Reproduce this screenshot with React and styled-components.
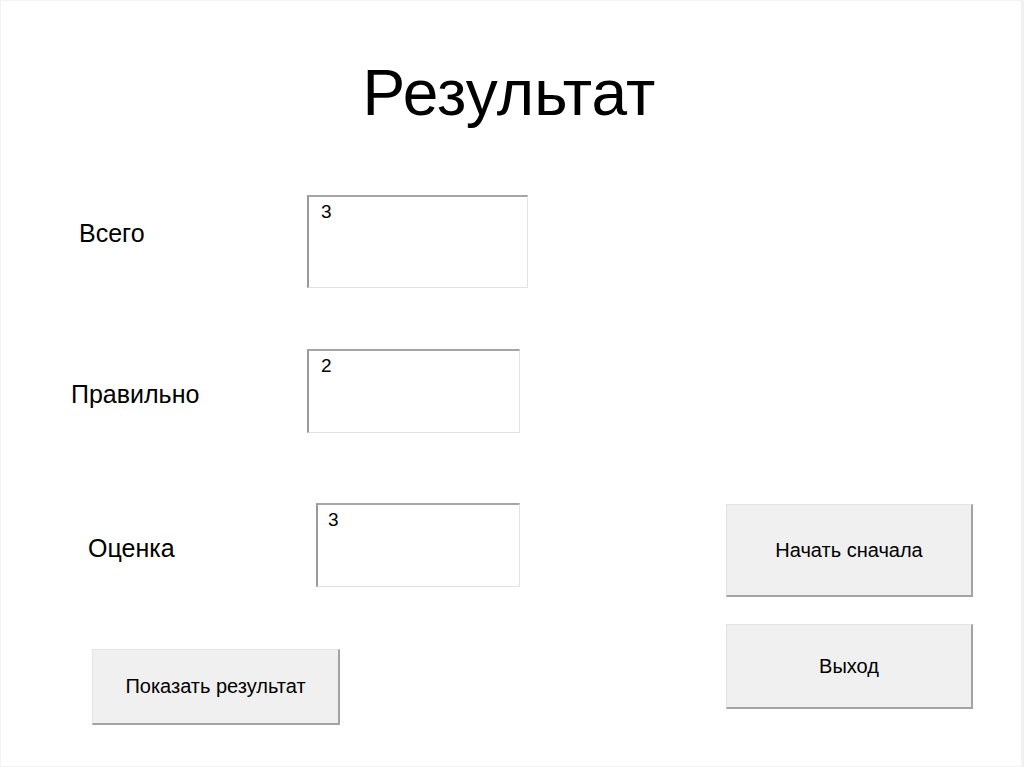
import React from "react";
import styled, { createGlobalStyle } from "styled-components";

const GlobalStyle = createGlobalStyle`
  html, body {
    margin: 0;
    padding: 0;
    background: #ffffff;
  }
  body {
    font-family: "Liberation Sans", Arial, sans-serif;
    color: #000;
  }
  * { box-sizing: border-box; }
`;

const Slide = styled.div`
  width: 1024px;
  height: 767px;
  background: #ffffff;
  border: 1px solid #f3f3f3;
  border-right: 3px solid #f1f1f1;
  overflow: hidden;
`;

const Title = styled.h1`
  margin: 60px 0 0 0;
  padding-right: 4px;
  font-size: 64px;
  line-height: 64px;
  font-weight: 400;
  text-align: center;
  letter-spacing: 0.2px;
`;

const Main = styled.div`
  margin-top: 70px;
  display: grid;
  grid-template-columns: 725px 247px;
`;

const LeftColumn = styled.div`
  display: flex;
  flex-direction: column;
`;

const RightColumn = styled.div`
  display: flex;
  flex-direction: column;
  gap: 27px;
  padding-top: 309px;
`;

const FieldRow = styled.div`
  display: grid;
  grid-template-columns: ${(p) => p.$boxX}px ${(p) => p.$boxW}px;
  margin-top: ${(p) => p.$gap}px;
`;

const Label = styled.div`
  padding-left: ${(p) => p.$x}px;
  padding-top: ${(p) => p.$top}px;
  font-size: 25px;
  line-height: 25px;
`;

const ValueBox = styled.div`
  height: ${(p) => p.$h}px;
  background: #ffffff;
  border-top: 2px solid #a5a5a5;
  border-left: 2px solid #9a9a9a;
  border-right: 1px solid #e2e2e2;
  border-bottom: 1px solid #e2e2e2;
  padding: 5px 0 0 ${(p) => p.$pad}px;
  font-size: 19px;
  line-height: 19px;
`;

const ActionButton = styled.button`
  width: ${(p) => p.$w}px;
  height: ${(p) => p.$h}px;
  margin-left: ${(p) => p.$x || 0}px;
  margin-top: ${(p) => p.$top || 0}px;
  background: #f0f0f0;
  border-top: 1px solid #e4e4e4;
  border-left: 1px solid #e4e4e4;
  border-right: 2px solid #a3a3a3;
  border-bottom: 2px solid #a3a3a3;
  font-family: "Liberation Sans", Arial, sans-serif;
  font-size: 20px;
  color: #000;
  padding: 0;
  display: flex;
  align-items: center;
  justify-content: center;
  cursor: pointer;
`;

const fields = [
  { label: "Всего", value: "3", gap: 0, labelX: 78, labelTop: 26, boxX: 306, boxW: 221, boxH: 93, pad: 12 },
  { label: "Правильно", value: "2", gap: 61, labelX: 70, labelTop: 33, boxX: 306, boxW: 213, boxH: 84, pad: 12 },
  { label: "Оценка", value: "3", gap: 70, labelX: 87, labelTop: 33, boxX: 315, boxW: 204, boxH: 84, pad: 10 },
];

export default function App() {
  return (
    <>
      <GlobalStyle />
      <Slide>
        <Title>Результат</Title>
        <Main>
          <LeftColumn>
            {fields.map((f) => (
              <FieldRow key={f.label} $gap={f.gap} $boxX={f.boxX} $boxW={f.boxW}>
                <Label $x={f.labelX} $top={f.labelTop}>
                  {f.label}
                </Label>
                <ValueBox $h={f.boxH} $pad={f.pad}>
                  {f.value}
                </ValueBox>
              </FieldRow>
            ))}
            <ActionButton $w={248} $h={76} $x={91} $top={62}>
              Показать результат
            </ActionButton>
          </LeftColumn>
          <RightColumn>
            <ActionButton $w={247} $h={93}>Начать сначала</ActionButton>
            <ActionButton $w={247} $h={85}>Выход</ActionButton>
          </RightColumn>
        </Main>
      </Slide>
    </>
  );
}
